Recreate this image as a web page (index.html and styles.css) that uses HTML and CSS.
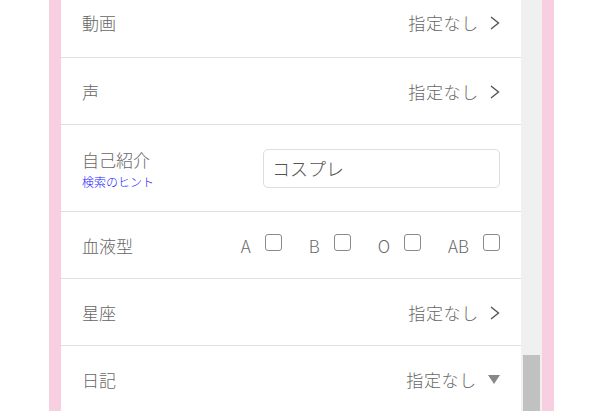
FILE: index.html
```html
<!DOCTYPE html>
<html lang="ja">
<head>
<meta charset="utf-8">
<title>検索条件</title>
<link rel="stylesheet" href="styles.css">
</head>
<body>
<div class="frame">
  <div class="panel">
    <div class="list">
      <div class="row row-first">
        <span class="label">動画</span>
        <span class="value"><span class="vtext">指定なし</span><svg class="chev" width="10" height="14" viewBox="0 0 10 14"><polyline points="1,1 8.5,7 1,13" fill="none" stroke="#555" stroke-width="1.4"/></svg></span>
      </div>
      <div class="row">
        <span class="label">声</span>
        <span class="value"><span class="vtext">指定なし</span><svg class="chev" width="10" height="14" viewBox="0 0 10 14"><polyline points="1,1 8.5,7 1,13" fill="none" stroke="#555" stroke-width="1.4"/></svg></span>
      </div>
      <div class="row row-tall">
        <div class="label-block">
          <span class="label">自己紹介</span>
          <a class="hint">検索のヒント</a>
        </div>
        <div class="input">コスプレ</div>
      </div>
      <div class="row">
        <span class="label">血液型</span>
        <div class="blood">
          <label class="bt"><span>A</span><span class="cb"></span></label>
          <label class="bt"><span>B</span><span class="cb"></span></label>
          <label class="bt"><span>O</span><span class="cb"></span></label>
          <label class="bt"><span>AB</span><span class="cb"></span></label>
        </div>
      </div>
      <div class="row">
        <span class="label">星座</span>
        <span class="value"><span class="vtext">指定なし</span><svg class="chev" width="10" height="14" viewBox="0 0 10 14"><polyline points="1,1 8.5,7 1,13" fill="none" stroke="#555" stroke-width="1.4"/></svg></span>
      </div>
      <div class="row">
        <span class="label">日記</span>
        <span class="value"><span class="vtext">指定なし</span><svg class="tri" width="12" height="9" viewBox="0 0 12 9"><polygon points="0,0 12,0 6,9" fill="#888"/></svg></span>
      </div>
    </div>
    <div class="scrollbar"><div class="thumb"></div></div>
  </div>
</div>
</body>
</html>
```
FILE: styles.css
```css
html, body {
  margin: 0;
  padding: 0;
  background: #fff;
  height: 411px;
  overflow: hidden;
  font-family: "Noto Sans CJK JP", "Noto Sans", sans-serif;
  font-weight: 300;
}
.frame {
  margin-left: 49px;
  width: 505px;
  height: 411px;
  box-sizing: border-box;
  padding: 0 12px;
  background: #f8cee1;
  display: flex;
}
.panel {
  display: flex;
  width: 481px;
  background: #fff;
  overflow: hidden;
}
.list {
  width: 460px;
  margin-top: -12px;
}
.row {
  display: flex;
  align-items: center;
  justify-content: space-between;
  height: 67px;
  box-sizing: border-box;
  border-bottom: 1px solid #e0e0e0;
  padding: 0 21px;
}
.row-first {
  height: 70px;
  padding-bottom: 1px;
}
.row-tall {
  height: 87px;
}
.label {
  font-size: 17px;
  color: #666;
}
.label-block {
  display: flex;
  flex-direction: column;
}
.hint {
  font-size: 12px;
  color: #1a1aff;
  margin-top: 1px;
}
.value {
  display: flex;
  align-items: center;
  gap: 11px;
  font-size: 17px;
  color: #666;
}
.vtext {
  letter-spacing: 0.7px;
}
.chev {
  margin-top: 2px;
}
.input {
  width: 237px;
  height: 39px;
  box-sizing: border-box;
  border: 1px solid #ddd;
  border-radius: 5px;
  padding: 0 8px;
  display: flex;
  align-items: center;
  font-size: 18px;
  color: #555;
}
.blood {
  display: flex;
  align-items: center;
}
.bt {
  display: flex;
  align-items: center;
  gap: 14px;
  margin-left: 27px;
  font-size: 17px;
  color: #666;
}
.cb {
  width: 17px;
  height: 17px;
  box-sizing: border-box;
  border: 1px solid #8a8a8a;
  border-radius: 3px;
  background: #fff;
  margin-top: -6px;
}
.scrollbar {
  width: 21px;
  background: #f0f0f0;
  padding-top: 355px;
  box-sizing: border-box;
}
.thumb {
  margin-left: 2px;
  width: 17px;
  height: 100%;
  background: #c1c1c1;
}
```
